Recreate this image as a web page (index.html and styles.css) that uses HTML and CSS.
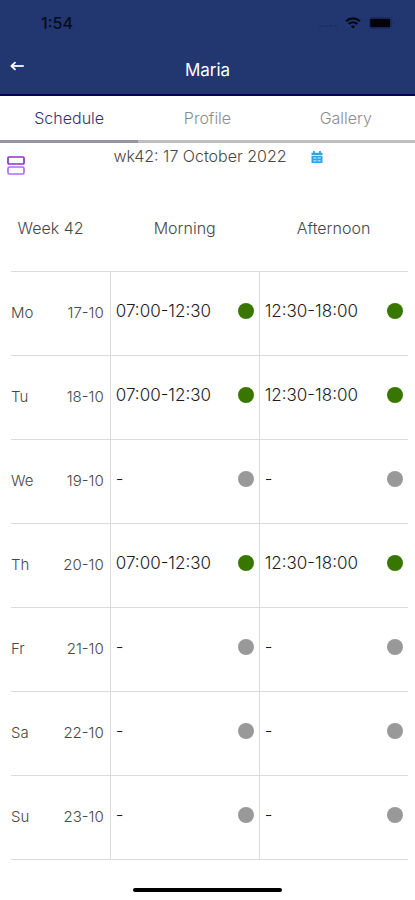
FILE: index.html
```html
<!DOCTYPE html>
<html lang="en">
<head>
<meta charset="utf-8">
<meta name="viewport" content="width=device-width, initial-scale=1">
<title>Maria</title>
<link rel="stylesheet" href="styles.css">
</head>
<body>
<header class="app-bar">
  <div class="status">
    <span class="clock">1:54</span>
    <span class="status-icons">
      <svg width="18" height="12" viewBox="0 0 18 12" aria-hidden="true"><path d="M0 9h18" stroke="#152455" stroke-width="1.6" stroke-dasharray="4 1" opacity=".45"/></svg>
      <svg width="16" height="12" viewBox="0 0 16 12" fill="none" stroke="#050914" stroke-width="2.2" aria-hidden="true"><path d="M1 4.2C5 .4 11 .4 15 4.2M3.6 7c2.6-2.3 6.2-2.3 8.8 0"/><path d="M8 11.6 5.8 9.4q2.2-1.7 4.4 0z" fill="#050914" stroke="none"/></svg>
      <svg width="26" height="12" viewBox="0 0 26 12" aria-hidden="true"><rect x=".5" y=".5" width="22" height="11" rx="2" fill="none" stroke="#1b2b62"/><rect x="1.2" y="1.8" width="20" height="8.4" rx="1" fill="#02040a"/><path d="M24 4q2 2 0 4z" fill="#17265a"/></svg>
    </span>
  </div>
  <div class="title-row">
    <button class="back" type="button" aria-label="Back">
      <svg width="14" height="10" viewBox="0 0 14 10" fill="none" stroke="#fff" stroke-linecap="round" stroke-linejoin="round" aria-hidden="true"><path d="M13 5H2" stroke="#e3e7f5" stroke-width="2"/><path d="M5 1.6 1.4 5 5 8.4" stroke-width="1.8"/></svg>
    </button>
    <h1>Maria</h1>
  </div>
</header>
<nav class="tabs">
  <a class="tab active" href="#schedule" aria-current="page">Schedule</a>
  <a class="tab" href="#profile">Profile</a>
  <a class="tab" href="#gallery">Gallery</a>
</nav>
<main id="schedule">
  <div class="week-bar">
    <button class="view" type="button" aria-label="Change view">
      <svg width="18" height="19" viewBox="0 0 18 19" fill="none" stroke-width="1.7" aria-hidden="true"><rect x="1" y="1" width="16" height="7" rx="1" stroke="#8f2fd0"/><rect x="1" y="11" width="16" height="7" rx="1.5" stroke="#ac6cf0"/></svg>
    </button>
    <span class="week-date">wk42: 17 October 2022</span>
    <button class="pick" type="button" aria-label="Pick a date">
      <svg width="12" height="12" viewBox="0 0 12 12" aria-hidden="true"><path d="M3 0v3M9 0v3" stroke="#35a5d8" stroke-width="1.8"/><path d="M.5 1.8h11V4H.5zM.5 4.8h11V12H.5z" fill="#35a5d8"/><path d="M2.4 6.2h3v1.6h-3zM6.6 6.2h3v1.6h-3zM2.4 9h3v1.4h-3zM6.6 9h3v1.4h-3z" fill="#9ad8f2"/></svg>
    </button>
  </div>
  <table class="schedule">
    <thead><tr><th class="week" scope="col">Week 42</th><th scope="col">Morning</th><th scope="col">Afternoon</th></tr></thead>
    <tbody>
      <tr><th scope="row"><div class="day"><span>Mo</span><span>17-10</span></div></th><td><div class="slot on">07:00-12:30</div></td><td><div class="slot on">12:30-18:00</div></td></tr>
      <tr><th scope="row"><div class="day"><span>Tu</span><span>18-10</span></div></th><td><div class="slot on">07:00-12:30</div></td><td><div class="slot on">12:30-18:00</div></td></tr>
      <tr><th scope="row"><div class="day"><span>We</span><span>19-10</span></div></th><td><div class="slot">-</div></td><td><div class="slot">-</div></td></tr>
      <tr><th scope="row"><div class="day"><span>Th</span><span>20-10</span></div></th><td><div class="slot on">07:00-12:30</div></td><td><div class="slot on">12:30-18:00</div></td></tr>
      <tr><th scope="row"><div class="day"><span>Fr</span><span>21-10</span></div></th><td><div class="slot">-</div></td><td><div class="slot">-</div></td></tr>
      <tr><th scope="row"><div class="day"><span>Sa</span><span>22-10</span></div></th><td><div class="slot">-</div></td><td><div class="slot">-</div></td></tr>
      <tr><th scope="row"><div class="day"><span>Su</span><span>23-10</span></div></th><td><div class="slot">-</div></td><td><div class="slot">-</div></td></tr>
    </tbody>
  </table>
</main>
<div class="home-bar"></div>
</body>
</html>
```
FILE: styles.css
```css
* { box-sizing: border-box; }
body {
  margin: 0;
  background: #fff;
  color: #484848;
  font: 300 16px/20px Inter, "Liberation Sans", sans-serif;
}
button { padding: 0; border: 0; background: none; }
svg { display: block; }
.app-bar {
  background: #22366f;
  border-bottom: 2px solid #02025c;
}
.status {
  display: flex;
  justify-content: space-between;
  align-items: center;
  height: 46px;
  padding: 0 20px 0 41px;
}
.clock { color: #070d20; font-size: 16px; font-weight: 500; }
.status-icons { display: flex; align-items: center; gap: 8px; }
.title-row {
  display: grid;
  grid-template-columns: 1fr auto 1fr;
  align-items: center;
  height: 48px;
  padding: 0 10px;
}
.back { justify-self: start; padding-bottom: 9px; }
h1 { margin: 0; color: #fff; font-size: 17px; font-weight: 400; }
.tabs { display: flex; }
.tab {
  flex: 1;
  padding: 12px 0;
  border-bottom: 3px solid #bfbfbf;
  color: #8c8c8c;
  text-align: center;
  text-decoration: none;
}
.tab.active { border-color: #9696a2; color: #333070; }
.week-bar {
  display: grid;
  grid-template-columns: 1fr auto 1fr;
  align-items: start;
  height: 43px;
  padding: 3px 22px 0 7px;
}
.view { justify-self: start; padding-top: 10px; }
.pick { justify-self: start; padding: 5px 0 0 24px; }
.schedule {
  width: calc(100% - 18px);
  margin-left: 11px;
  border-collapse: collapse;
  table-layout: fixed;
}
th { padding: 0; font-weight: 300; }
thead th { height: 85px; }
thead .week { width: 25%; padding-right: 20px; }
tbody tr { height: 84px; border-top: 1px solid #dcdcdc; }
tbody tr:last-child { border-bottom: 1px solid #dcdcdc; }
td { padding: 0 5px 4px; border-left: 1px solid #dcdcdc; }
.day {
  display: flex;
  justify-content: space-between;
  padding-right: 6px;
  font-size: 15px;
}
.slot {
  display: flex;
  justify-content: space-between;
  align-items: center;
  color: #1c1c1c;
  font-size: 17px;
}
.slot::after {
  content: "";
  width: 16px;
  height: 16px;
  border-radius: 50%;
  background: #999;
}
.slot.on::after { background: #397600; }
.home-bar {
  width: 36%;
  height: 4px;
  margin: 28px auto 8px;
  border-radius: 2px;
  background: #000;
}
```
